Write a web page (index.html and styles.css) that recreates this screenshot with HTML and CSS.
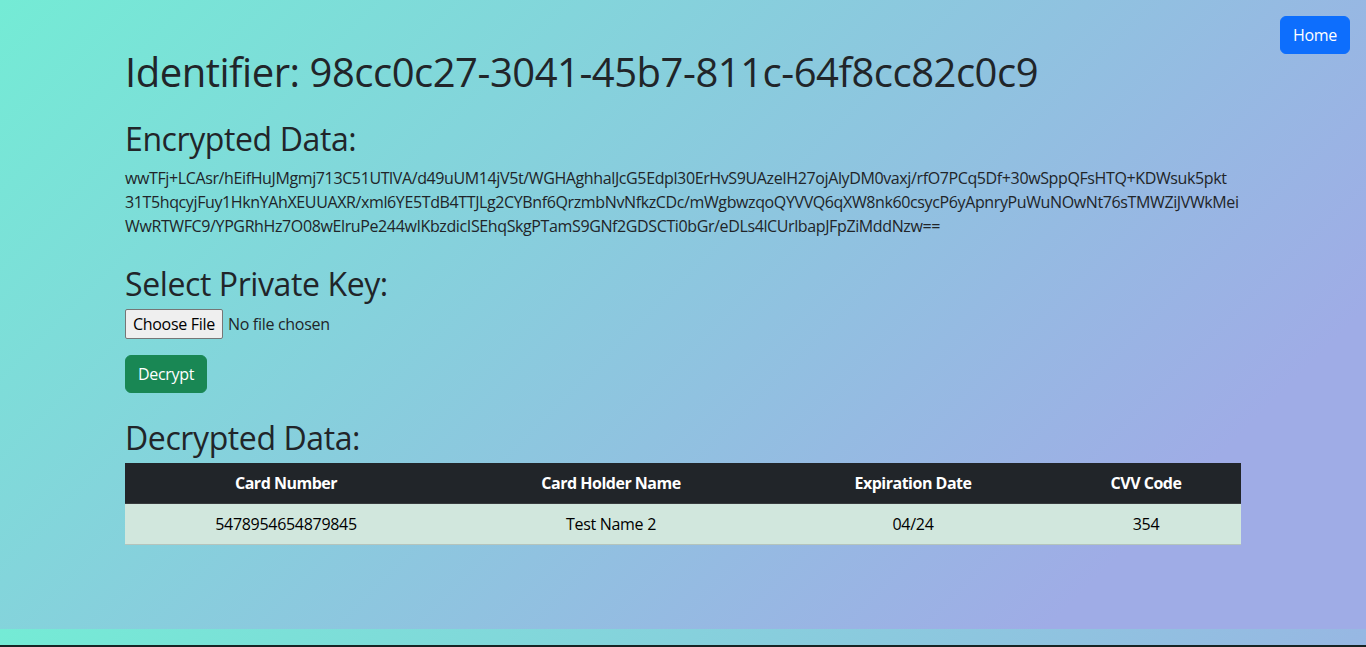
FILE: index.html
```html
<!DOCTYPE html>
<html lang="en">
<head>
<meta charset="utf-8">
<title>Decrypt</title>
<link rel="stylesheet" href="styles.css">
</head>
<body>
<a class="btn btn-home" href="#">Home</a>
<main class="container">
  <h1 class="title">Identifier: 98cc0c27-3041-45b7-811c-64f8cc82c0c9</h1>
  <h2 class="section-title">Encrypted Data:</h2>
  <p class="cipher">wwTFj+LCAsr/hEifHuJMgmj713C51UTlVA/d49uUM14jV5t/WGHAghhalJcG5Edpl30ErHvS9UAzeIH27ojAlyDM0vaxj/rfO7PCq5Df+30wSppQFsHTQ+KDWsuk5pkt<br>31T5hqcyjFuy1HknYAhXEUUAXR/xml6YE5TdB4TTJLg2CYBnf6QrzmbNvNfkzCDc/mWgbwzqoQYVVQ6qXW8nk60csycP6yApnryPuWuNOwNt76sTMWZiJVWkMei<br>WwRTWFC9/YPGRhHz7O08wElruPe244wIKbzdicISEhqSkgPTamS9GNf2GDSCTi0bGr/eDLs4lCUrlbapJFpZiMddNzw==</p>
  <h2 class="section-title">Select Private Key:</h2>
  <form class="key-form">
    <input class="file-input" type="file">
    <button class="btn btn-decrypt" type="button">Decrypt</button>
  </form>
  <h2 class="section-title section-gap">Decrypted Data:</h2>
  <table class="data-table">
    <colgroup>
      <col class="col-number">
      <col class="col-name">
      <col class="col-exp">
      <col class="col-cvv">
    </colgroup>
    <thead>
      <tr>
        <th>Card Number</th>
        <th>Card Holder Name</th>
        <th>Expiration Date</th>
        <th>CVV Code</th>
      </tr>
    </thead>
    <tbody>
      <tr>
        <td>5478954654879845</td>
        <td>Test Name 2</td>
        <td>04/24</td>
        <td>354</td>
      </tr>
    </tbody>
  </table>
</main>
<div class="taskbar"></div>
</body>
</html>
```
FILE: styles.css
```css
html {
  background: linear-gradient(135deg, #74ebd5 0%, #9face6 84%);
}
body {
  margin: 0;
  font-family: "Open Sans", "Noto Sans", sans-serif;
  font-size: 16px;
  line-height: 24px;
  letter-spacing: -0.3px;
  color: #212529;
}
.container {
  width: 1116px;
  margin: 0 auto;
  padding: 48px 0 68px;
}
.title {
  margin: 0 0 24px;
  font-size: 40px;
  line-height: 48px;
  font-weight: 500;
  letter-spacing: -0.48px;
}
.section-title {
  margin: 0 0 8px;
  font-size: 32px;
  line-height: 38.4px;
  font-weight: 500;
  letter-spacing: -0.4px;
}
.section-gap {
  margin-top: 26px;
  margin-bottom: 6px;
}
.cipher {
  margin: 0 0 27px;
  white-space: nowrap;
  letter-spacing: -0.38px;
}
.key-form {
  display: flex;
  flex-direction: column;
  align-items: flex-start;
  gap: 16px;
  margin: 0;
}
.file-input {
  margin: -3px 0 0;
  font: inherit;
  letter-spacing: -0.3px;
  color: #212529;
  height: 30px;
}
.file-input::file-selector-button {
  font: inherit;
  letter-spacing: -0.3px;
  color: #000;
  background: #efefef;
  border: 1px solid #767676;
  border-radius: 2px;
  padding: 2px 7px;
  margin-right: 5px;
  height: 30px;
}
.btn {
  display: inline-block;
  padding: 6px 12px;
  border: 1px solid transparent;
  border-radius: 6px;
  font: inherit;
  letter-spacing: -0.3px;
  color: #fff;
  text-decoration: none;
  cursor: pointer;
}
.btn-decrypt {
  background: #198754;
  border-color: #198754;
}
.btn-home {
  position: absolute;
  top: 16px;
  right: 16px;
  background: #0d6efd;
  border-color: #0d6efd;
}
.data-table {
  width: 100%;
  border-collapse: collapse;
  margin-bottom: 16px;
  text-align: center;
}
.col-number { width: 322px; }
.col-name { width: 328px; }
.col-exp { width: 276px; }
.col-cvv { width: 190px; }
.data-table th {
  padding: 8px;
  background: #212529;
  color: #fff;
  font-weight: 700;
  letter-spacing: -0.5px;
  border-bottom: 1px solid #373b3e;
}
.data-table td {
  padding: 8px;
  background: #d1e7dd;
  color: #000;
  border-bottom: 1px solid #b4c4bc;
}
.taskbar {
  position: fixed;
  left: 0;
  right: 0;
  bottom: 0;
  height: 2px;
  background: #172424;
}
```
